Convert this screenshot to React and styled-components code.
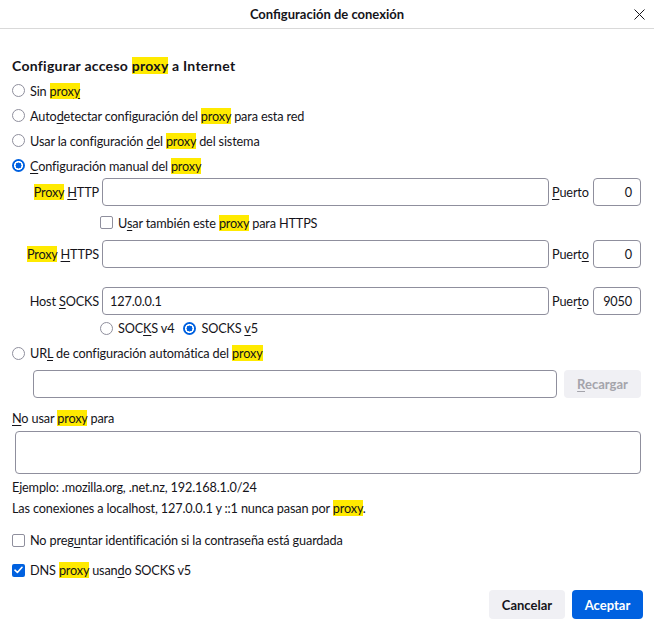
import React from 'react'
import styled, { createGlobalStyle } from 'styled-components'

const GlobalStyle = createGlobalStyle`
  body {
    margin: 0;
    background: #ffffff;
    font-family: Lato, 'Liberation Sans', sans-serif;
    font-size: 12.7px;
    letter-spacing: -0.15px;
    color: #15141a;
  }
`

const Dialog = styled.div`
  width: 654px;
  height: 628px;
  display: flex;
  flex-direction: column;
  box-sizing: border-box;
`

const Header = styled.div`
  height: 28px;
  border-bottom: 1px solid #d9d9d9;
  display: grid;
  grid-template-columns: 1fr auto 1fr;
  align-items: center;
`

const Title = styled.div`
  grid-column: 2;
  font-weight: 700;
  font-size: 13px;
  letter-spacing: 0;
`

const Close = styled.button`
  grid-column: 3;
  justify-self: end;
  margin-right: 6px;
  width: 18px;
  height: 18px;
  border: none;
  background: none;
  padding: 0;
  display: flex;
  align-items: center;
  justify-content: center;
`

const Content = styled.div`
  padding: 0 13px 0 12px;
  display: flex;
  flex-direction: column;
`

const Heading = styled.div`
  font-weight: 700;
  font-size: 14px;
  letter-spacing: 0.28px;
  height: 18px;
  line-height: 18px;
  margin-top: 28px;
  margin-bottom: 3px;
`

const Mark = styled.span`
  background: #ffea00;
`

const Key = styled.span`
  text-decoration: underline;
  text-underline-offset: 2px;
`

const Option = styled.label`
  display: flex;
  align-items: center;
  gap: ${(p) => p.$gap || 5}px;
  height: ${(p) => p.$h || 25}px;
  margin-top: ${(p) => p.$mt || 0}px;
  padding-left: ${(p) => p.$indent || 0}px;
  white-space: nowrap;
`

const Radio = styled.span`
  width: 13px;
  height: 13px;
  box-sizing: border-box;
  border-radius: 50%;
  flex: none;
  margin-left: ${(p) => p.$ml || 0}px;
  border: ${(p) => (p.$on ? 'none' : '1px solid #8f8f9d')};
  background: ${(p) =>
    p.$on
      ? 'radial-gradient(circle, #0061e0 0 2.8px, #ffffff 3.2px 4.3px, #0061e0 4.7px)'
      : '#ffffff'};
`

const Check = styled.span`
  width: 13px;
  height: 13px;
  box-sizing: border-box;
  border-radius: 2px;
  flex: none;
  border: ${(p) => (p.$on ? 'none' : '1px solid #8f8f9d')};
  background: ${(p) => (p.$on ? '#0061e0' : '#ffffff')};
  display: flex;
  align-items: center;
  justify-content: center;
`

const FieldGrid = styled.div`
  display: grid;
  grid-template-columns: 87px 1fr 38px 48px;
  column-gap: 3px;
  align-items: center;
  margin-top: ${(p) => p.$mt || 0}px;
`

const FieldLabel = styled.div`
  text-align: ${(p) => (p.$left ? 'left' : 'right')};
  white-space: nowrap;
`

const Input = styled.div`
  height: 28px;
  box-sizing: border-box;
  border: 1px solid #8f8f9d;
  border-radius: 4px;
  background: #ffffff;
  display: flex;
  align-items: center;
  justify-content: ${(p) => (p.$right ? 'flex-end' : 'flex-start')};
  padding: 0 8px 0 7px;
`

const UrlRow = styled.div`
  display: flex;
  gap: 7px;
  margin-top: 5px;
  padding-left: 21px;
`

const Grow = styled(Input)`
  flex: 1;
`

const Button = styled.button`
  height: ${(p) => p.$h || 28}px;
  border: none;
  border-radius: 4px;
  padding: 0;
  width: ${(p) => p.$w}px;
  font-family: inherit;
  font-size: 13px;
  letter-spacing: 0;
  font-weight: 700;
  background: ${(p) => (p.$primary ? '#0061e0' : '#f0f0f4')};
  color: ${(p) => (p.$primary ? '#ffffff' : p.$disabled ? '#a4a4ab' : '#15141a')};
`

const Line = styled.div`
  height: ${(p) => p.$h || 18}px;
  line-height: ${(p) => p.$h || 18}px;
  margin-top: ${(p) => p.$mt || 0}px;
  white-space: nowrap;
`

const TextArea = styled.div`
  height: 43px;
  box-sizing: border-box;
  margin: 3px 0 0 3px;
  border: 1px solid #8f8f9d;
  border-radius: 4px;
  background: #ffffff;
`

const Footer = styled.div`
  display: flex;
  justify-content: flex-end;
  gap: 7px;
  margin-top: 8px;
  margin-right: -2px;
`

const CheckMark = () => (
  <svg width="9" height="8" viewBox="0 0 9 8">
    <path d="M1 4.2 L3.4 6.5 L8 1.3" stroke="#fff" strokeWidth="1.6" fill="none" strokeLinecap="round" strokeLinejoin="round" />
  </svg>
)

export default function App() {
  return (
    <Dialog>
      <GlobalStyle />
      <Header>
        <Title>Configuración de conexión</Title>
        <Close aria-label="Cerrar">
          <svg width="11" height="11" viewBox="0 0 11 11">
            <path d="M0.5 0.5 L10.5 10.5 M10.5 0.5 L0.5 10.5" stroke="#15141a" strokeWidth="1" />
          </svg>
        </Close>
      </Header>
      <Content>
        <Heading>
          Configurar acceso <Mark>proxy</Mark> a Internet
        </Heading>
        <Option>
          <Radio />
          <span>
            Sin <Mark>prox<Key>y</Key></Mark>
          </span>
        </Option>
        <Option>
          <Radio />
          <span>
            Auto<Key>d</Key>etectar configuración del <Mark>proxy</Mark> para esta red
          </span>
        </Option>
        <Option>
          <Radio />
          <span>
            Usar la configuración <Key>d</Key>el <Mark>proxy</Mark> del sistema
          </span>
        </Option>
        <Option>
          <Radio $on />
          <span>
            <Key>C</Key>onfiguración manual del <Mark>proxy</Mark>
          </span>
        </Option>

        <FieldGrid>
          <FieldLabel>
            <Mark>Proxy</Mark> <Key>H</Key>TTP
          </FieldLabel>
          <Input />
          <FieldLabel $left>
            <Key>P</Key>uerto
          </FieldLabel>
          <Input $right>0</Input>
        </FieldGrid>
        <Option $h={31} $indent={88} $mt={1}>
          <Check />
          <span>
            U<Key>s</Key>ar también este <Mark>proxy</Mark> para HTTPS
          </span>
        </Option>
        <FieldGrid $mt={2}>
          <FieldLabel>
            <Mark>Proxy</Mark> <Key>H</Key>TTPS
          </FieldLabel>
          <Input />
          <FieldLabel $left>
            Puert<Key>o</Key>
          </FieldLabel>
          <Input $right>0</Input>
        </FieldGrid>
        <FieldGrid $mt={19}>
          <FieldLabel>
            Host <Key>S</Key>OCKS
          </FieldLabel>
          <Input>127.0.0.1</Input>
          <FieldLabel $left>
            Puer<Key>t</Key>o
          </FieldLabel>
          <Input $right>9050</Input>
        </FieldGrid>
        <Option $h={26} $indent={88}>
          <Radio />
          <span>
            SOC<Key>K</Key>S v4
          </span>
          <Radio $on $ml={4} />
          <span>
            SOCKS <Key>v</Key>5
          </span>
        </Option>
        <Option $h={24}>
          <Radio />
          <span>
            UR<Key>L</Key> de configuración automática del <Mark>proxy</Mark>
          </span>
        </Option>
        <UrlRow>
          <Grow />
          <Button $w={77} $disabled>
            <Key>R</Key>ecargar
          </Button>
        </UrlRow>
        <Line $h={20} $mt={10}>
          <Key>N</Key>o usar <Mark>proxy</Mark> para
        </Line>
        <TextArea />
        <Line $mt={4}>Ejemplo: .mozilla.org, .net.nz, 192.168.1.0/24</Line>
        <Line $mt={3}>
          Las conexiones a localhost, 127.0.0.1 y ::1 nunca pasan por <Mark>proxy</Mark>.
        </Line>
        <Option $h={24} $mt={11}>
          <Check />
          <span>
            No preg<Key>u</Key>ntar identificación si la contraseña está guardada
          </span>
        </Option>
        <Option $h={24} $mt={6}>
          <Check $on>
            <CheckMark />
          </Check>
          <span>
            DNS <Mark>proxy</Mark> usan<Key>d</Key>o SOCKS v5
          </span>
        </Option>
        <Footer>
          <Button $w={76} $h={29}>Cancelar</Button>
          <Button $w={71} $h={29} $primary>
            Aceptar
          </Button>
        </Footer>
      </Content>
    </Dialog>
  )
}
